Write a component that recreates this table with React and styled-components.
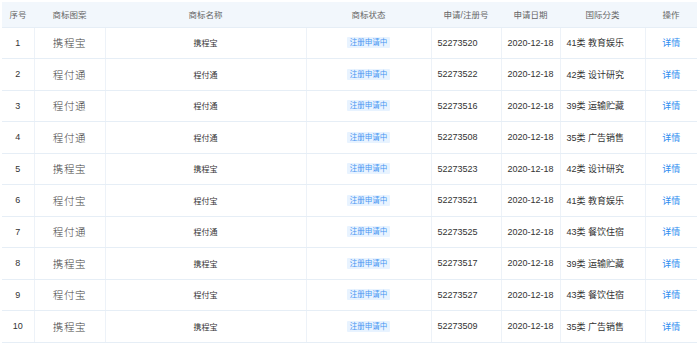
import React from "react";
import styled, { createGlobalStyle } from "styled-components";

const Global = createGlobalStyle`
  html, body { margin: 0; padding: 0; background: #fff; }
  body { font-family: "Liberation Sans", "Noto Sans CJK SC", sans-serif; }
`;

const Wrap = styled.div`
  padding: 2px 3px 0 2px;
`;

const Table = styled.table`
  width: 695px;
  border-collapse: collapse;
  table-layout: fixed;
  font-size: 9px;
  color: #333;
`;

const HeadRow = styled.tr`
  height: 25px;
  background: #f2f7fc;
`;

const Th = styled.th`
  font-weight: normal;
  color: #666;
  font-size: 8.5px;
  text-align: center;
  border-bottom: 1px solid #e6eef6;
`;

const Row = styled.tr`
  height: 31.5px;
`;

const Td = styled.td`
  text-align: ${(p) => p.$align || "center"};
  padding: ${(p) => (p.$align === "left" ? "0 0 0 6px" : "0")};
  border-bottom: 1px solid #e6eef6;
  border-left: ${(p) => (p.$first ? "none" : "1px solid #edf2f8")};
  white-space: nowrap;
`;

const Logo = styled.span`
  font-family: "Noto Sans CJK SC", serif;
  font-size: 10.5px;
  font-weight: 300;
  color: #444;
  letter-spacing: 0.6px;
`;

const Name = styled.span`
  font-family: "Noto Sans CJK SC", sans-serif;
  font-size: 8px;
  font-weight: 400;
  color: #333;
`;

const Tag = styled.span`
  display: inline-block;
  height: 11px;
  line-height: 11px;
  padding: 0 3px;
  background: #e8f3ff;
  color: #4796f2;
  font-size: 7.5px;
  border-radius: 1px;
`;

const Link = styled.a`
  color: #2f8cf0;
  font-size: 9px;
  text-decoration: none;
`;

const rows = [
  ["1", "携程宝", "携程宝", "52273520", "41类 教育娱乐"],
  ["2", "程付通", "程付通", "52273522", "42类 设计研究"],
  ["3", "程付通", "程付通", "52273516", "39类 运输贮藏"],
  ["4", "程付通", "程付通", "52273508", "35类 广告销售"],
  ["5", "携程宝", "携程宝", "52273523", "42类 设计研究"],
  ["6", "程付宝", "程付宝", "52273521", "41类 教育娱乐"],
  ["7", "程付通", "程付通", "52273525", "43类 餐饮住宿"],
  ["8", "携程宝", "携程宝", "52273517", "39类 运输贮藏"],
  ["9", "程付宝", "程付宝", "52273527", "43类 餐饮住宿"],
  ["10", "携程宝", "携程宝", "52273509", "35类 广告销售"],
];

export default function App() {
  return (
    <>
      <Global />
      <Wrap>
        <Table>
          <colgroup>
            <col style={{ width: 32 }} />
            <col style={{ width: 71 }} />
            <col style={{ width: 201 }} />
            <col style={{ width: 125 }} />
            <col style={{ width: 70 }} />
            <col style={{ width: 59 }} />
            <col style={{ width: 85 }} />
            <col style={{ width: 52 }} />
          </colgroup>
          <thead>
            <HeadRow>
              <Th>序号</Th>
              <Th>商标图案</Th>
              <Th>商标名称</Th>
              <Th>商标状态</Th>
              <Th>申请/注册号</Th>
              <Th>申请日期</Th>
              <Th>国际分类</Th>
              <Th>操作</Th>
            </HeadRow>
          </thead>
          <tbody>
            {rows.map((r) => (
              <Row key={r[0]}>
                <Td $first>{r[0]}</Td>
                <Td><Logo>{r[1]}</Logo></Td>
                <Td><Name>{r[2]}</Name></Td>
                <Td><Tag>注册申请中</Tag></Td>
                <Td $align="left">{r[3]}</Td>
                <Td>2020-12-18</Td>
                <Td $align="left">{r[4]}</Td>
                <Td><Link href="#">详情</Link></Td>
              </Row>
            ))}
          </tbody>
        </Table>
      </Wrap>
    </>
  );
}
